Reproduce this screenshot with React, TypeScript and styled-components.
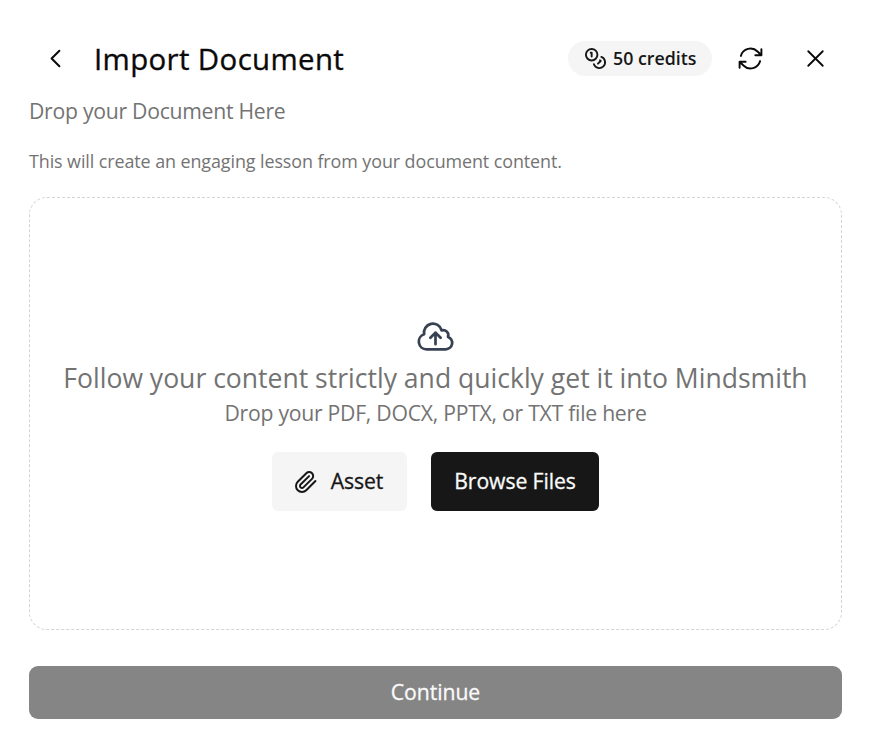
import React from "react";
import styled, { createGlobalStyle } from "styled-components";
import { Coins } from "lucide-react";

const GlobalStyle = createGlobalStyle`
  * { box-sizing: border-box; }
  body { margin: 0; background: #fff; }
  button { font: inherit; border: 0; padding: 0; background: none; color: inherit; }
  svg { display: block; flex: none; }
`;

const Dialog = styled.main`
  width: 871px;
  height: 748px;
  padding: 29px;
  display: flex;
  flex-direction: column;
  font-family: "Open Sans", sans-serif;
  color: #0a0a0a;
  white-space: nowrap;
`;

const Header = styled.header`
  display: flex;
  align-items: center;
  height: 59px;
`;

const IconButton = styled.button`
  width: 53px;
  height: 53px;
  display: flex;
  align-items: center;
  justify-content: center;
`;

const Title = styled.h1`
  flex: 1;
  margin: 0 0 0 12px;
  font-size: 29.4px;
  line-height: 40px;
  font-weight: 500;
  letter-spacing: 0.38px;
  -webkit-text-stroke: 0.35px currentColor;
`;

const Credits = styled.div`
  display: flex;
  align-items: center;
  gap: 6px;
  width: 144px;
  height: 35px;
  padding: 0 0 1px 16px;
  border-radius: 18px;
  background: #f5f5f5;
  color: #171717;
  font-size: 17.8px;
  font-weight: 600;
`;

const HeaderActions = styled.div`
  display: flex;
  align-items: center;
  gap: 12px;
`;

const Lead = styled.p`
  margin: 8px 0 0;
  font-size: 21.2px;
  line-height: 30px;
  letter-spacing: -0.27px;
  color: #737373;
`;

const Description = styled.p`
  margin: 23px 0 0;
  font-size: 17.9px;
  line-height: 24px;
  letter-spacing: -0.08px;
  color: #737373;
`;

const DropZone = styled.section`
  margin-top: 24px;
  height: 433px;
  padding-top: 118px;
  border: 1px dashed #d4d4d4;
  border-radius: 18px;
  display: flex;
  flex-direction: column;
  align-items: center;
  color: #737373;
`;

const DropTitle = styled.h2`
  margin: 3px 0 0;
  font-size: 26.56px;
  line-height: 36px;
  font-weight: 400;
`;

const DropHint = styled.p`
  margin: 2px 0 0;
  font-size: 21.2px;
  line-height: 30px;
  letter-spacing: -0.26px;
`;

const Actions = styled.div`
  display: flex;
  gap: 24px;
  margin-top: 24px;
`;

const ActionButton = styled.button<{ $primary?: boolean }>`
  display: flex;
  align-items: center;
  justify-content: center;
  gap: 12px;
  width: ${(p) => (p.$primary ? 168 : 135)}px;
  height: 59px;
  padding-bottom: 2px;
  border-radius: 6px;
  font-size: 21.2px;
  font-weight: 500;
  letter-spacing: -0.1px;
  -webkit-text-stroke: 0.3px currentColor;
  background: ${(p) => (p.$primary ? "#171717" : "#f5f5f5")};
  color: ${(p) => (p.$primary ? "#fafafa" : "#171717")};

  svg { margin: 2px 1px 0 -2px; }
`;

const ContinueButton = styled.button`
  margin-top: 36px;
  height: 53px;
  padding-bottom: 2px;
  border-radius: 9px;
  font-size: 21.2px;
  font-weight: 500;
  letter-spacing: -0.05px;
  -webkit-text-stroke: 0.3px currentColor;
  background: #858585;
  color: #fafafa;
`;

interface OutlineIconProps {
  d: string;
  size: number;
  color?: string;
  weight?: number;
}

const OutlineIcon = ({ d, size, color = "currentColor", weight = 1.5 }: OutlineIconProps) => (
  <svg width={size} height={size} viewBox="0 0 24 24" fill="none" stroke={color} strokeWidth={weight} strokeLinecap="round" strokeLinejoin="round">
    <path d={d} />
  </svg>
);

const paths = {
  back: "M15.75 19.5 8.25 12l7.5-7.5",
  refresh:
    "M16.023 9.348h4.992v-.001M2.985 19.644v-4.992m0 0h4.992m-4.993 0 3.181 3.183a8.25 8.25 0 0 0 13.803-3.7M4.031 9.865a8.25 8.25 0 0 1 13.803-3.7l3.181 3.182m0-4.991v4.99",
  close: "M6 18 18 6M6 6l12 12",
  cloud:
    "M12 16.5V9.75m0 0 3 3m-3-3-3 3M6.75 19.5a4.5 4.5 0 0 1-1.41-8.775 5.25 5.25 0 0 1 10.233-2.33 3 3 0 0 1 3.758 3.848A3.752 3.752 0 0 1 18 19.5H6.75Z",
  clip:
    "m21.44 11.05-9.19 9.19a6 6 0 0 1-8.49-8.49l8.57-8.57A4 4 0 1 1 18 8.84l-8.59 8.57a2 2 0 0 1-2.83-2.83l8.49-8.48",
};

export default function App() {
  return (
    <>
      <GlobalStyle />
      <Dialog>
        <Header>
          <IconButton aria-label="Back"><OutlineIcon d={paths.back} size={25} weight={1.9} /></IconButton>
          <Title>Import Document</Title>
          <HeaderActions>
            <Credits><Coins size={23} />50 credits</Credits>
            <IconButton aria-label="Refresh"><OutlineIcon d={paths.refresh} size={29} weight={1.6} /></IconButton>
            <IconButton aria-label="Close"><OutlineIcon d={paths.close} size={29} weight={1.5} /></IconButton>
          </HeaderActions>
        </Header>
        <Lead>Drop your Document Here</Lead>
        <Description>This will create an engaging lesson from your document content.</Description>
        <DropZone>
          <OutlineIcon d={paths.cloud} size={41} color="#374151" weight={1.6} />
          <DropTitle>Follow your content strictly and quickly get it into Mindsmith</DropTitle>
          <DropHint>Drop your PDF, DOCX, PPTX, or TXT file here</DropHint>
          <Actions>
            <ActionButton><OutlineIcon d={paths.clip} size={24} weight={2} />Asset</ActionButton>
            <ActionButton $primary>Browse Files</ActionButton>
          </Actions>
        </DropZone>
        <ContinueButton>Continue</ContinueButton>
      </Dialog>
    </>
  );
}
